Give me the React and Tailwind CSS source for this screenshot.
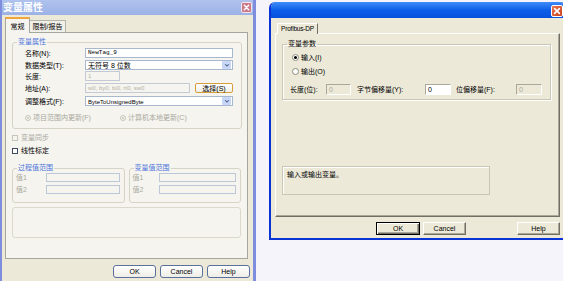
const Cross = ({ className }) => (
  <svg viewBox="0 0 10 10" className={className}>
    <path d="M2.6 2.6l4.8 4.8M7.4 2.6l-4.8 4.8" stroke="white" strokeWidth="1.6" strokeLinecap="round" />
  </svg>
);

const Chevron = () => (
  <svg viewBox="0 0 8 8" className="h-[6px] w-[6px]">
    <path d="M1.5 3l2.5 2.5L6.5 3" stroke="#4d6185" strokeWidth="1.4" fill="none" />
  </svg>
);

// ---------- left dialog (inactive, XP theme) ----------

function XpField({ className, disabled, children }) {
  return (
    <div
      className={`flex h-[10px] items-center overflow-hidden border px-[2px] text-[6px] leading-none ${
        disabled ? "border-[#c3cad6] bg-[#f5f4ef] text-[#b4b3a8]" : "border-[#a7b8cf] bg-white text-black"
      } ${className}`}
    >
      {children}
    </div>
  );
}

function XpCombo({ children }) {
  return (
    <div className="flex h-[10px] flex-1 items-center justify-between border border-[#a7b8cf] bg-white pl-[2px] pr-px text-[7px] leading-none text-black">
      <span>{children}</span>
      <span className="flex h-[8px] w-[9px] items-center justify-center rounded-[1px] bg-[#c8d7f7]">
        <Chevron />
      </span>
    </div>
  );
}

function XpButton({ children }) {
  return (
    <div className="flex h-[13px] w-[43px] items-center justify-center rounded-[3px] border border-[#5a719b] bg-gradient-to-b from-white to-[#eeede6] text-[7px] leading-none text-black">
      {children}
    </div>
  );
}

function Row({ label, children, className }) {
  return (
    <div className={`flex h-[10px] items-center ${className}`}>
      <span className="w-[60px] text-[7px] leading-none text-black">{label}</span>
      {children}
    </div>
  );
}

function DisabledRadio({ children }) {
  return (
    <div className="flex w-[95px] items-center gap-[2px] text-[7px] leading-none text-[#aaa99e]">
      <span className="flex h-[6px] w-[6px] items-center justify-center rounded-full border border-[#c6c5ba]">
        <span className="h-[2px] w-[2px] rounded-full bg-[#c6c5ba]" />
      </span>
      {children}
    </div>
  );
}

function RangeGroup({ title, labelW }) {
  return (
    <fieldset className="w-[113px] rounded-[3px] border border-[#d6d4c6]">
      <legend className="ml-[4px] px-px text-[7px] leading-[8px] text-[#4f74dc]">{title}</legend>
      <div className="flex flex-col gap-[3px] pl-[3px] pr-[4px] pt-px pb-[8px]">
        {["值1", "值2"].map((v) => (
          <div key={v} className="flex h-[9px] items-center">
            <span className={`${labelW} text-[7px] leading-none text-[#aaa99e]`}>{v}</span>
            <div className="h-[9px] flex-1 border border-[#bcc8d8] bg-[#f5f4ef]" />
          </div>
        ))}
      </div>
    </fieldset>
  );
}

function TagDialog() {
  return (
    <div className="flex h-[281px] w-[256px] shrink-0 flex-col border-l-2 border-r-[3px] border-[#7f8ddf] bg-[#ece9d8]">
      <div className="flex h-[15px] items-center justify-between bg-gradient-to-b from-[#b0c3ee] to-[#9cb2e6] px-px">
        <span className="text-[10px] font-bold leading-none text-white">变量属性</span>
        <div className="flex h-[11px] w-[11px] items-center justify-center rounded-[2px] border border-[#f1e3e8] bg-[#cc7a8b]">
          <Cross className="h-[9px] w-[9px]" />
        </div>
      </div>

      <div className="flex flex-1 flex-col pl-[3px] pr-[3px] pt-[2px]">
        <div className="flex h-[15px] items-end">
          <div className="relative z-10 -mb-px flex h-[16px] w-[25px] items-center justify-center border-x border-t-2 border-x-[#a3a79e] border-t-[#f0a63a] bg-[#f5f4ef] text-[7px] leading-none text-black">
            常规
          </div>
          <div className="flex h-[12px] w-[36px] items-center justify-center border-r border-t border-[#b3b6ab] bg-[#f0efe8] text-[7px] leading-none text-black">
            限制/报告
          </div>
        </div>

        <div className="mr-[2px] flex h-[227px] flex-col border border-[#a3a79e] bg-[#f5f4ef] px-[6px] pt-[5px]">
          <fieldset className="rounded-[3px] border border-[#d6d4c6]">
            <legend className="ml-[4px] px-px text-[7px] leading-[8px] text-[#4f74dc]">变量属性</legend>
            <div className="flex flex-col pl-[12px] pr-[8px] pt-[2px] pb-[7px]">
              <Row label="名称(N):">
                <XpField className="flex-1 font-['Liberation_Mono',monospace]">NewTag_9</XpField>
              </Row>
              <Row label="数据类型(T):" className="mt-[2px]">
                <XpCombo>无符号 8 位数</XpCombo>
              </Row>
              <Row label="长度:" className="mt-px">
                <XpField disabled className="w-[35px]">1</XpField>
              </Row>
              <Row label="地址(A):" className="mt-[2px]">
                <XpField disabled className="w-[105px]">w0, by0, bi0, rt0, sw0</XpField>
                <div className="ml-[5px] flex h-[10px] w-[38px] items-center justify-center rounded-[2px] border border-[#d79e3c] bg-gradient-to-b from-white to-[#efeee6] text-[7px] leading-none text-black">
                  选择(S)
                </div>
              </Row>
              <Row label="调整格式(F):" className="mt-[3px]">
                <XpCombo>
                  <span className="text-[6px]">ByteToUnsignedByte</span>
                </XpCombo>
              </Row>
              <div className="mt-[8px] flex h-[7px] items-center">
                <DisabledRadio>项目范围内更新(F)</DisabledRadio>
                <DisabledRadio>计算机本地更新(C)</DisabledRadio>
              </div>
            </div>
          </fieldset>

          <div className="mt-[5px] flex h-[7px] items-center gap-[3px] text-[7px] leading-none text-[#aaa99e]">
            <span className="h-[6px] w-[6px] border border-[#c6c5ba]" />
            变量同步
          </div>
          <div className="mt-[6px] flex h-[7px] items-center gap-[3px] text-[7px] leading-none text-black">
            <span className="h-[6px] w-[6px] border border-[#3c4a5c] bg-white" />
            线性标定
          </div>

          <div className="mt-[10px] flex gap-[4px]">
            <RangeGroup title="过程值范围" labelW="w-[30px]" />
            <RangeGroup title="变量值范围" labelW="w-[26px]" />
          </div>

          <div className="mt-[4px] h-[31px] rounded-[3px] border border-[#dbd9cc]" />
        </div>

        <div className="mt-[6px] flex justify-end gap-[4px]">
          <XpButton>OK</XpButton>
          <XpButton>Cancel</XpButton>
          <XpButton>Help</XpButton>
        </div>
      </div>
    </div>
  );
}

// ---------- right dialog (active, classic controls) ----------

const raised =
  "border border-t-white border-l-white border-r-[#716f64] border-b-[#716f64] shadow-[inset_-1px_-1px_0_#aca899]";
const sunken = "border border-t-[#aca899] border-l-[#aca899] border-b-white border-r-white";

function ClassicButton({ children, isDefault, className }) {
  return (
    <div
      className={`flex h-[13px] items-center justify-center bg-[#ece9d8] text-[7px] leading-none text-black ${
        isDefault
          ? "border border-black shadow-[inset_1px_1px_0_#fff,inset_-1px_-1px_0_#716f64,inset_-2px_-2px_0_#aca899]"
          : raised
      } ${className}`}
    >
      {children}
    </div>
  );
}

function ClassicRadio({ checked, children, className }) {
  return (
    <div className={`flex h-[7px] items-center gap-[2px] text-[7px] leading-none text-black ${className}`}>
      <span className="flex h-[7px] w-[7px] items-center justify-center rounded-full border border-[#8d8a7d] bg-white">
        {checked && <span className="h-[3px] w-[3px] rounded-full bg-black" />}
      </span>
      {children}
    </div>
  );
}

function NumField({ disabled, className }) {
  return (
    <div
      className={`flex h-[11px] items-center pl-[2px] text-[7px] leading-none ${sunken} ${
        disabled ? "bg-[#ece9d8] text-[#aca899]" : "bg-white text-black"
      } ${className}`}
    >
      0
    </div>
  );
}

function ProfibusDialog() {
  return (
    <div className="ml-[13px] mt-[2px] flex h-[238px] w-[297px] shrink-0 flex-col overflow-hidden rounded-t-[6px] border-x-2 border-b-2 border-[#0a33d6] bg-[#ece9d8]">
      <div className="flex h-[16px] items-start justify-end bg-gradient-to-b from-[#3d8cf8] via-[#0b5ee8] to-[#0750dc] pr-px pt-[3px]">
        <div className="flex h-[12px] w-[12px] items-center justify-center rounded-[2px] border border-white bg-gradient-to-br from-[#e9744f] to-[#c8401f]">
          <Cross className="h-[10px] w-[10px]" />
        </div>
      </div>

      <div className="flex flex-1 flex-col pl-[4px] pt-[5px]">
        <div className="flex h-[10px] items-end">
          <div className="relative z-10 -mb-px ml-[2px] flex h-[11px] w-[41px] items-center justify-center whitespace-nowrap border-l border-r border-t border-l-white border-r-[#716f64] border-t-white bg-[#ece9d8] text-[6.5px] leading-none tracking-[-0.2px] text-black">
            Profibus-DP
          </div>
        </div>

        <div className={`flex h-[184px] w-[285px] flex-col pl-[6px] pt-[6px] ${raised}`}>
          <fieldset className="w-[269px] border border-[#c9c6b6] shadow-[inset_1px_1px_0_#fff,1px_1px_0_#fff]">
            <legend className="ml-[4px] px-px text-[7px] leading-[8px] text-black">变量参数</legend>
            <div className="flex flex-col pl-[9px] pt-[6px] pb-[4px]">
              <ClassicRadio checked>输入(I)</ClassicRadio>
              <ClassicRadio className="mt-[7px]">输出(O)</ClassicRadio>
              <div className="-ml-[2px] mt-[9px] flex h-[11px] items-center text-[7px] leading-none text-black">
                <span className="w-[36px]">长度(位):</span>
                <NumField disabled className="w-[25px]" />
                <span className="ml-[6px] w-[68px]">字节偏移量(Y):</span>
                <NumField className="w-[26px]" />
                <span className="ml-[5px] w-[60px]">位偏移量(F):</span>
                <NumField disabled className="w-[26px]" />
              </div>
            </div>
          </fieldset>

          <div className="mt-[66px] h-[29px] w-[208px] border border-[#c9c6b6] pl-[4px] pt-[4px] text-[7px] leading-none text-black shadow-[inset_1px_1px_0_#fff]">
            输入或输出变量。
          </div>
        </div>

        <div className="mt-[5px] flex">
          <ClassicButton isDefault className="ml-[101px] w-[44px]">OK</ClassicButton>
          <ClassicButton className="ml-[3px] w-[43px]">Cancel</ClassicButton>
          <ClassicButton className="ml-[51px] w-[43px]">Help</ClassicButton>
        </div>
      </div>
    </div>
  );
}

export default function App() {
  return (
    <div className="flex h-[281px] w-[563px] overflow-hidden bg-[#f4f4fa] font-['Liberation_Sans','Noto_Sans_CJK_SC',sans-serif]">
      <TagDialog />
      <ProfibusDialog />
    </div>
  );
}
